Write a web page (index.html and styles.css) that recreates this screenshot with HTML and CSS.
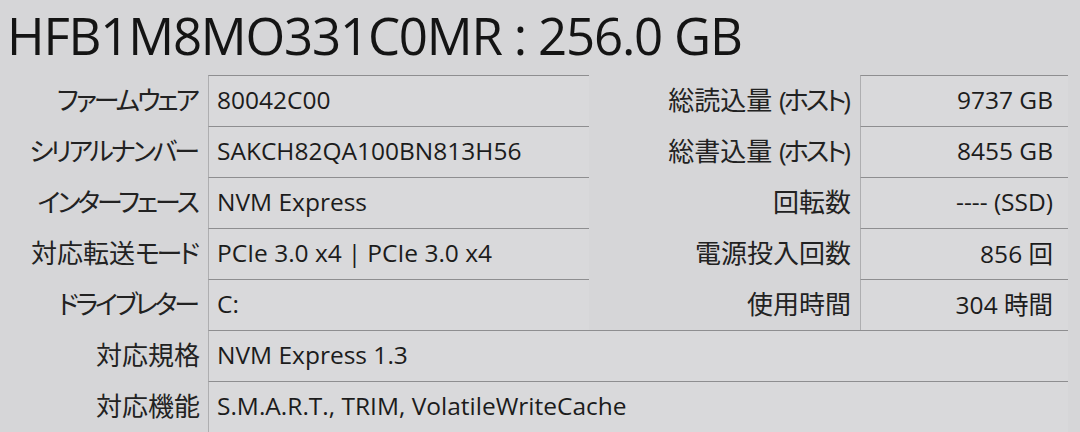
FILE: index.html
```html
<!DOCTYPE html>
<html lang="ja">
<head>
<meta charset="utf-8">
<link rel="stylesheet" href="styles.css">
</head>
<body>
<div class="page">
  <div class="title">HFB1M8MO331C0MR : 256.0 GB</div>
  <div class="grid">
    <div class="label"><span class="kana">ファームウェア</span></div>
    <div class="box">80042C00</div>
    <div class="rlabel">総読込量 <span class="kana">(ホスト)</span></div>
    <div class="box rbox">9737 GB</div>

    <div class="label"><span class="kana">シリアルナンバー</span></div>
    <div class="box">SAKCH82QA100BN813H56</div>
    <div class="rlabel">総書込量 <span class="kana">(ホスト)</span></div>
    <div class="box rbox">8455 GB</div>

    <div class="label"><span class="kana">インターフェース</span></div>
    <div class="box">NVM Express</div>
    <div class="rlabel">回転数</div>
    <div class="box rbox">---- (SSD)</div>

    <div class="label">対応転送<span class="kana">モード</span></div>
    <div class="box">PCIe 3.0 x4<span class="bar">|</span>PCIe 3.0 x4</div>
    <div class="rlabel">電源投入回数</div>
    <div class="box rbox">856 回</div>

    <div class="label"><span class="kana">ドライブレター</span></div>
    <div class="box">C:</div>
    <div class="rlabel">使用時間</div>
    <div class="box rbox">304 時間</div>

    <div class="label">対応規格</div>
    <div class="box wide">NVM Express 1.3</div>

    <div class="label">対応機能</div>
    <div class="box wide">S.M.A.R.T., TRIM, VolatileWriteCache</div>
  </div>
</div>
</body>
</html>
```
FILE: styles.css
```css
html, body {
  margin: 0;
  padding: 0;
  background: #d6d6d8;
}
.page {
  width: 1080px;
  height: 432px;
  overflow: hidden;
  font-family: "Open Sans", "Noto Sans CJK JP", sans-serif;
  color: #1c1c1c;
}
.title {
  height: 75px;
  line-height: normal;
  font-size: 51px;
  letter-spacing: -1.2px;
  padding-left: 7px;
  color: #141414;
  white-space: nowrap;
}
.grid {
  display: grid;
  grid-template-columns: 208px 381px 271px 208px;
  grid-auto-rows: 51px;
  font-size: 24.5px;
}
.label, .rlabel {
  display: flex;
  align-items: center;
  justify-content: flex-end;
  white-space: pre;
  font-size: 26px;
  font-feature-settings: "palt";
  color: #222;
  padding-bottom: 3px;
}
.label { padding-right: 8px; }
.rlabel { padding-right: 9px; }
.kana {
  letter-spacing: -3px;
  margin-right: 3px;
}
.box {
  display: flex;
  align-items: center;
  padding-left: 8px;
  padding-bottom: 3px;
  border-top: 1px solid #8e8e90;
  border-left: 1px solid #aeaeb0;
  background: #d9d9db;
  white-space: nowrap;
}
.bar {
  margin: 0 6px;
}
.rbox {
  justify-content: flex-end;
  padding-right: 15px;
}
.wide {
  grid-column: 2 / 5;
}
```
